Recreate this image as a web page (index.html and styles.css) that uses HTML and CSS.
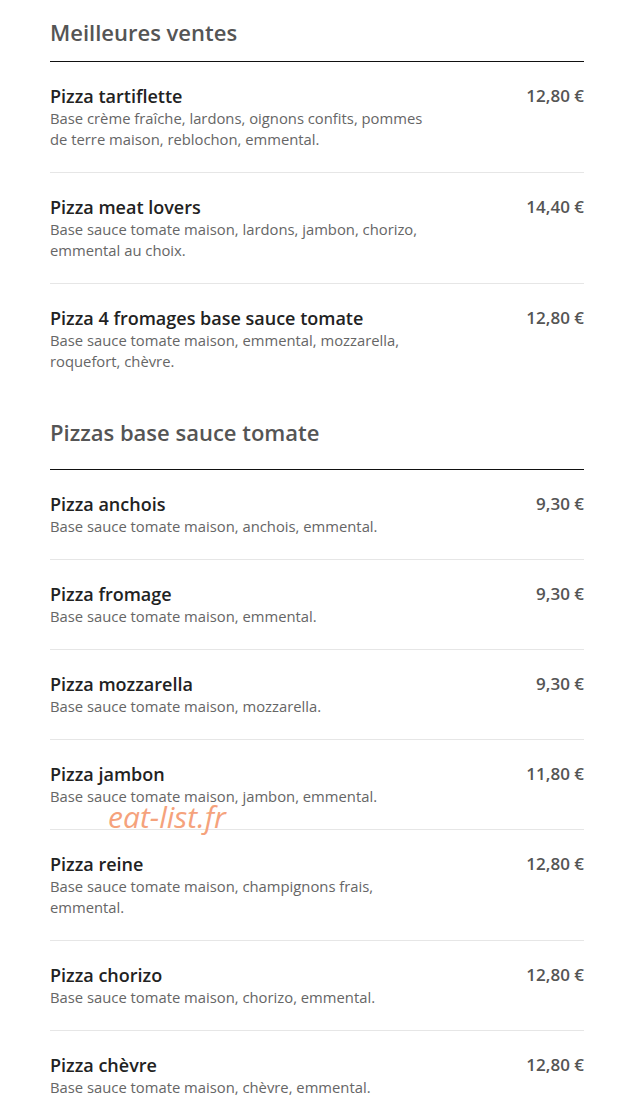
FILE: index.html
```html
<!DOCTYPE html>
<html lang="fr">
<head>
    <meta charset="UTF-8">
    <meta name="viewport" content="width=device-width, initial-scale=1.0">
    <title>Carte - Pizzas</title>
    <link rel="stylesheet" href="styles.css">
</head>
<body>
    <div class="menu">
        <section class="menu-section">
            <h2 class="section-title">Meilleures ventes</h2>
            <ul class="dish-list">
                <li class="dish">
                    <div class="dish-info">
                        <h3 class="dish-name">Pizza tartiflette</h3>
                        <p class="dish-desc">Base crème fraîche, lardons, oignons confits, pommes de terre maison, reblochon, emmental.</p>
                    </div>
                    <span class="dish-price">12,80 €</span>
                </li>
                <li class="dish">
                    <div class="dish-info">
                        <h3 class="dish-name">Pizza meat lovers</h3>
                        <p class="dish-desc">Base sauce tomate maison, lardons, jambon, chorizo, emmental au choix.</p>
                    </div>
                    <span class="dish-price">14,40 €</span>
                </li>
                <li class="dish">
                    <div class="dish-info">
                        <h3 class="dish-name">Pizza 4 fromages base sauce tomate</h3>
                        <p class="dish-desc">Base sauce tomate maison, emmental, mozzarella, roquefort, chèvre.</p>
                    </div>
                    <span class="dish-price">12,80 €</span>
                </li>
            </ul>
        </section>

        <section class="menu-section">
            <h2 class="section-title">Pizzas base sauce tomate</h2>
            <ul class="dish-list">
                <li class="dish">
                    <div class="dish-info">
                        <h3 class="dish-name">Pizza anchois</h3>
                        <p class="dish-desc">Base sauce tomate maison, anchois, emmental.</p>
                    </div>
                    <span class="dish-price">9,30 €</span>
                </li>
                <li class="dish">
                    <div class="dish-info">
                        <h3 class="dish-name">Pizza fromage</h3>
                        <p class="dish-desc">Base sauce tomate maison, emmental.</p>
                    </div>
                    <span class="dish-price">9,30 €</span>
                </li>
                <li class="dish">
                    <div class="dish-info">
                        <h3 class="dish-name">Pizza mozzarella</h3>
                        <p class="dish-desc">Base sauce tomate maison, mozzarella.</p>
                    </div>
                    <span class="dish-price">9,30 €</span>
                </li>
                <li class="dish">
                    <div class="dish-info">
                        <h3 class="dish-name">Pizza jambon</h3>
                        <p class="dish-desc">Base sauce tomate maison, jambon, emmental.</p>
                    </div>
                    <span class="dish-price">11,80 €</span>
                    <span class="watermark">eat-list.fr</span>
                </li>
                <li class="dish">
                    <div class="dish-info">
                        <h3 class="dish-name">Pizza reine</h3>
                        <p class="dish-desc">Base sauce tomate maison, champignons frais, emmental.</p>
                    </div>
                    <span class="dish-price">12,80 €</span>
                </li>
                <li class="dish">
                    <div class="dish-info">
                        <h3 class="dish-name">Pizza chorizo</h3>
                        <p class="dish-desc">Base sauce tomate maison, chorizo, emmental.</p>
                    </div>
                    <span class="dish-price">12,80 €</span>
                </li>
                <li class="dish">
                    <div class="dish-info">
                        <h3 class="dish-name">Pizza chèvre</h3>
                        <p class="dish-desc">Base sauce tomate maison, chèvre, emmental.</p>
                    </div>
                    <span class="dish-price">12,80 €</span>
                </li>
            </ul>
        </section>
    </div>
</body>
</html>
```

FILE: styles.css
```css
* {
    margin: 0;
    padding: 0;
    box-sizing: border-box;
}

body {
    font-family: 'Open Sans', 'Noto Sans', sans-serif;
    background: #fff;
    color: #222;
}

.menu {
    padding: 17px 43px 0 50px;
}

.menu-section + .menu-section {
    margin-top: 23px;
}

.section-title {
    font-size: 22px;
    line-height: 30px;
    font-weight: 600;
    color: #555;
    padding-bottom: 22px;
    border-bottom: 1px solid #111;
}

.menu-section:first-child .section-title {
    padding-bottom: 14px;
}

.dish-list {
    list-style: none;
}

.dish {
    position: relative;
    display: flex;
    justify-content: space-between;
    align-items: flex-start;
    padding: 22px 0 22px;
    border-bottom: 1px solid #e6e6e6;
}

.dish-list .dish:last-child {
    border-bottom: none;
}

.dish-info {
    max-width: 386px;
}

.dish-name {
    font-size: 18px;
    line-height: 24px;
    font-weight: 600;
    color: #222;
}

.dish-desc {
    font-size: 14.8px;
    line-height: 21px;
    color: #666;
}

.dish-price {
    font-size: 17px;
    line-height: 24px;
    font-weight: 600;
    color: #555;
    white-space: nowrap;
}

.watermark {
    position: absolute;
    left: 58px;
    top: 59px;
    font-size: 30px;
    line-height: 36px;
    font-style: italic;
    color: #f5a27c;
    pointer-events: none;
}
```
